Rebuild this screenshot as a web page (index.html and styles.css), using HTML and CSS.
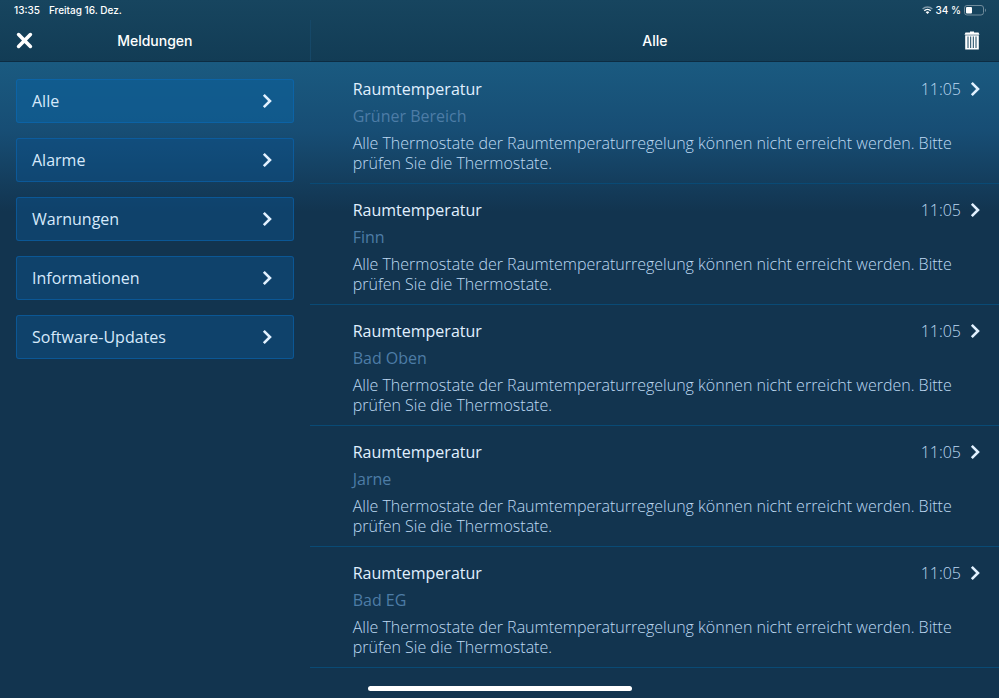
FILE: index.html
```html
<!DOCTYPE html>
<html lang="de">
<head>
    <meta charset="UTF-8">
    <meta name="viewport" content="width=device-width, initial-scale=1.0">
    <title>Meldungen</title>
    <link rel="stylesheet" href="styles.css">
</head>
<body>
    <svg width="0" height="0" class="symbols">
        <symbol id="chevron" viewBox="0 0 10 16">
            <path d="M1.8 1.8 8 8l-6.200 6.200" fill="none" stroke="currentColor" stroke-width="2.600"/>
        </symbol>
    </svg>

    <header class="topbar">
        <div class="statusbar">
            <span>13:35</span>
            <span>Freitag 16. Dez.</span>
            <div class="status-right">
                <svg width="11" height="8" viewBox="0 0 11 8">
                    <path d="M.6 3a7 7 0 0 1 9.800 0" fill="none" stroke="#7f98a8" stroke-width="1.300"/>
                    <path d="M2.300 4.800a4.600 4.600 0 0 1 6.400 0" fill="none" stroke="#fff" stroke-width="1.600"/>
                    <path d="M5.500 7.900 3.700 6.200a2.600 2.600 0 0 1 3.600 0z" fill="#fff"/>
                </svg>
                <span>34 %</span>
                <svg width="23" height="11" viewBox="0 0 23 11">
                    <rect x=".5" y=".5" width="19" height="9.500" rx="2.500" fill="none" stroke="#718c9c"/>
                    <rect x="2" y="2" width="6" height="6.500" rx="1" fill="#fff"/>
                    <path d="M21 3.600c1.300.5 1.300 2.800 0 3.300z" fill="#718c9c"/>
                </svg>
            </div>
        </div>
        <div class="titles">
            <div class="title-side">
                <button class="icon-btn close" aria-label="Schließen">
                    <svg width="17" height="17" viewBox="0 0 17 17">
                        <path d="M2.600 2.600l11.800 11.800M14.400 2.600 2.600 14.400" stroke="#fff" stroke-width="3.600" stroke-linecap="round"/>
                    </svg>
                </button>
                <h1>Meldungen</h1>
            </div>
            <div class="title-main">
                <h2>Alle</h2>
                <button class="icon-btn trash" aria-label="Löschen">
                    <svg width="16" height="19" viewBox="0 0 16 19">
                        <path d="M6 .5h4v1h4.500l1 2.200H.5l1-2.200H6z" fill="#fff"/>
                        <path d="M1.200 4.300h13.600v14.200H1.200z" fill="#fff"/>
                        <path d="M4 5.500v11.500M6.700 5.500v11.500M9.300 5.500v11.500M12 5.500v11.500" stroke="#14435d"/>
                    </svg>
                </button>
            </div>
        </div>
    </header>

    <div class="content">
        <nav class="menu">
            <button class="menu-item active">Alle<svg class="chevron"><use href="#chevron"/></svg></button>
            <button class="menu-item">Alarme<svg class="chevron"><use href="#chevron"/></svg></button>
            <button class="menu-item">Warnungen<svg class="chevron"><use href="#chevron"/></svg></button>
            <button class="menu-item">Informationen<svg class="chevron"><use href="#chevron"/></svg></button>
            <button class="menu-item">Software-Updates<svg class="chevron"><use href="#chevron"/></svg></button>
        </nav>

        <main class="messages">
            <article class="message">
                <div class="message-head">
                    <h3>Raumtemperatur</h3>
                    <time>11:05</time>
                    <svg class="chevron"><use href="#chevron"/></svg>
                </div>
                <p class="room">Grüner Bereich</p>
                <p class="text">Alle Thermostate der Raumtemperaturregelung können nicht erreicht werden. Bitte prüfen Sie die Thermostate.</p>
            </article>
            <article class="message">
                <div class="message-head">
                    <h3>Raumtemperatur</h3>
                    <time>11:05</time>
                    <svg class="chevron"><use href="#chevron"/></svg>
                </div>
                <p class="room">Finn</p>
                <p class="text">Alle Thermostate der Raumtemperaturregelung können nicht erreicht werden. Bitte prüfen Sie die Thermostate.</p>
            </article>
            <article class="message">
                <div class="message-head">
                    <h3>Raumtemperatur</h3>
                    <time>11:05</time>
                    <svg class="chevron"><use href="#chevron"/></svg>
                </div>
                <p class="room">Bad Oben</p>
                <p class="text">Alle Thermostate der Raumtemperaturregelung können nicht erreicht werden. Bitte prüfen Sie die Thermostate.</p>
            </article>
            <article class="message">
                <div class="message-head">
                    <h3>Raumtemperatur</h3>
                    <time>11:05</time>
                    <svg class="chevron"><use href="#chevron"/></svg>
                </div>
                <p class="room">Jarne</p>
                <p class="text">Alle Thermostate der Raumtemperaturregelung können nicht erreicht werden. Bitte prüfen Sie die Thermostate.</p>
            </article>
            <article class="message">
                <div class="message-head">
                    <h3>Raumtemperatur</h3>
                    <time>11:05</time>
                    <svg class="chevron"><use href="#chevron"/></svg>
                </div>
                <p class="room">Bad EG</p>
                <p class="text">Alle Thermostate der Raumtemperaturregelung können nicht erreicht werden. Bitte prüfen Sie die Thermostate.</p>
            </article>
        </main>
    </div>

    <div class="home-indicator"></div>
</body>
</html>
```
FILE: styles.css
```css
/* Grundlagen */
* {
    box-sizing: border-box;
}

body {
    margin: 0;
    min-height: 100vh;
    background: #12344f;
    color: #d6e9fb;
    font-family: "Open Sans", "Noto Sans", sans-serif;
    font-size: 16px;
    line-height: 20px;
}

h1, h2, h3, p {
    margin: 0;
}

button {
    font: inherit;
    color: inherit;
    cursor: pointer;
}

.symbols {
    position: absolute;
}

.chevron {
    width: 10px;
    height: 16px;
    flex: none;
    color: #e2f1ff;
}

/* Kopfbereich */
.topbar {
    background: linear-gradient(#17455f, #123c55);
    border-bottom: 1px solid #0d2c42;
    font-family: Inter, sans-serif;
    color: #fff;
}

.statusbar {
    display: flex;
    align-items: center;
    gap: 9px;
    height: 20px;
    padding: 0 12px 0 14px;
    font-size: 10px;
    font-weight: 500;
}

.status-right {
    display: flex;
    align-items: center;
    gap: 3px;
    margin-left: auto;
}

.titles {
    display: grid;
    grid-template-columns: 31% 1fr;
    height: 41px;
}

.title-side,
.title-main {
    position: relative;
    display: flex;
    align-items: center;
    justify-content: center;
}

.title-main {
    border-left: 1px solid #164868;
}

.titles h1,
.titles h2 {
    font-size: 14px;
    font-weight: 500;
}

.icon-btn {
    position: absolute;
    display: flex;
    padding: 0;
    border: none;
    background: none;
}

.close {
    left: 16px;
}

.trash {
    right: 19px;
}

/* Inhalt */
.content {
    display: grid;
    grid-template-columns: 31% 1fr;
    padding-top: 1px;
    background: linear-gradient(#1a5a80, #174d74 70px, #12344f 150px);
}

.menu {
    display: flex;
    flex-direction: column;
    gap: 15px;
    padding: 16px;
}

.menu-item {
    display: flex;
    align-items: center;
    justify-content: space-between;
    height: 44px;
    padding: 0 21px 0 15px;
    background: rgba(12, 80, 135, 0.5);
    border: 1px solid rgba(7, 108, 191, 0.5);
    border-radius: 3px;
    text-align: left;
}

.menu-item.active {
    background: rgba(14, 94, 150, 0.7);
}

/* Meldungen */
.message {
    display: flex;
    flex-direction: column;
    gap: 7px;
    padding: 16px 19px 10px 43px;
    border-bottom: 1px solid #094a75;
}

.message-head {
    display: flex;
    align-items: center;
    gap: 9px;
}

.message h3 {
    flex: 1;
    font-size: 16px;
    font-weight: 500;
    color: #e0f0ff;
}

.message time {
    font-weight: 300;
    color: #bfdaf3;
}

.room {
    color: #4d7ca6;
}

.text {
    padding-right: 24px;
    font-weight: 300;
    color: #bfdaf3;
}

.home-indicator {
    position: fixed;
    bottom: 7px;
    left: 50%;
    width: 264px;
    height: 5px;
    margin-left: -132px;
    border-radius: 3px;
    background: #fff;
}
```
